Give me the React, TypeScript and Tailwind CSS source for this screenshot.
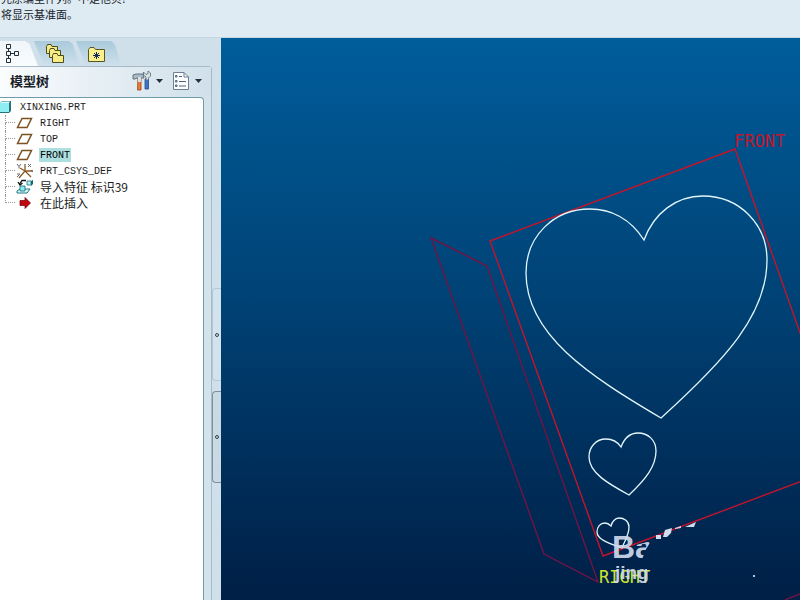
import type { ReactNode } from "react";

const CJK = "font-['Liberation_Mono','Noto_Sans_CJK_SC',monospace]";

function PlaneIcon() {
  return (
    <svg width="18" height="16" viewBox="0 0 18 16" fill="none" aria-hidden="true">
      <path d="M6 3.5H15.5L11 12.5H1.5Z" stroke="#7a5220" strokeWidth="1.5" />
    </svg>
  );
}

function CsysIcon() {
  return (
    <svg width="18" height="16" viewBox="0 0 18 16" fill="none" aria-hidden="true">
      <path d="M9 1V8L3 15M9 8L15 14M9 8H17M9 8L4 5" stroke="#8a5a22" strokeWidth="1.3" />
      <path d="M1 1L3 3.5V5.5M5 1L3 3.5M12 1L15 4M15 1L12 4M15 7L17 9M1 11H4L1 14" stroke="#6c6c70" />
    </svg>
  );
}

function ImportIcon() {
  return (
    <svg width="18" height="16" viewBox="0 0 18 16" aria-hidden="true">
      <path d="M11 2H15V6H11Z" fill="#b9f4f4" stroke="#3d8b92" />
      <path d="M15 2L17 1V5L15 7Z" fill="#176770" />
      <path d="M1 12L4 10H14L11 14H1Z" fill="#d9ffff" stroke="#207680" />
      <path d="M4 7H9V12H4Z" fill="#8deaf0" stroke="#31818a" />
      <path d="M10 1.5H6L4 4.500M2 3L4 6L6.500 4" fill="none" stroke="#111" strokeWidth="1.3" />
    </svg>
  );
}

function ArrowIcon() {
  return (
    <svg width="18" height="16" viewBox="0 0 18 16" aria-hidden="true">
      <path d="M4 5.500H9V2.500L14.500 8L9 13.500V10.500H4Z" fill="#c4040e" stroke="#65040a" strokeWidth=".7" />
    </svg>
  );
}

function FolderStackIcon() {
  return (
    <svg width="20" height="20" viewBox="0 0 20 20" aria-hidden="true">
      {[[1, 0], [4, 4], [7, 9]].map(([x, y]) => (
        <path
          key={x}
          transform={`translate(${x} ${y})`}
          d="M.5 2.500L1.500 .5H5L6 2.500H11.500V9.500H.5Z"
          fill="#f6ec86"
          stroke="#4f4c1c"
        />
      ))}
    </svg>
  );
}

function FolderStarIcon() {
  return (
    <svg width="20" height="20" viewBox="0 0 20 20" aria-hidden="true">
      <path d="M1.500 5.500L3 3.500H7L8.500 5.500H17.500V17.500H1.500Z" fill="#faf08c" stroke="#5a5522" />
      <path d="M9.500 8V15M6 11.500H13M7 9L12 14M12 9L7 14" stroke="#142a5c" />
    </svg>
  );
}

function TreeTabIcon() {
  return (
    <svg width="18" height="20" viewBox="0 0 18 20" fill="none" stroke="#222e38" aria-hidden="true">
      <path d="M2.500 .5H6.500V4.500H2.500ZM2.500 7.500H6.500V11.500H2.500ZM2.500 14.500H6.500V18.500H2.500ZM10.500 7.500H14.500V11.500H10.500ZM4.500 4.500V7.500M4.500 11.500V14.500M6.500 9.500H10.500" />
    </svg>
  );
}

function ToolsIcon() {
  return (
    <svg width="20" height="22" viewBox="0 0 20 22" aria-hidden="true">
      <path d="M13 9H16.500V19H13Z" fill="#3b75c9" stroke="#234a88" strokeWidth=".8" />
      <path d="M14 10V7L11.500 5V2L14 4.500L16 3.500V1L18.500 3V6L16.500 8V10Z" fill="#dbe2e7" stroke="#5b666f" strokeWidth=".8" />
      <path d="M6 7H9V20H5.500Z" fill="#ea7b33" stroke="#944316" strokeWidth=".8" />
      <path d="M1 9V5L4 4H11L12 8H5L3 9Z" fill="#a9bbc8" stroke="#4b5b68" strokeWidth=".8" />
      <path d="M6 7H9V12H6Z" fill="#d7e0e6" />
    </svg>
  );
}

function ListIcon() {
  return (
    <svg width="18" height="20" viewBox="0 0 18 20" fill="none" aria-hidden="true">
      <path d="M1.500 1.500H12L16.500 6V18.500H1.500Z" fill="#fbfdff" stroke="#6c7e90" />
      <path d="M12 1.500V6H16.500" stroke="#6c7e90" />
      <path d="M7 5.500H10M7 10.500H14M7 15H14" stroke="#50647a" />
      <path d="M3.500 4.500H5V6H3.500ZM3.500 9.500H5V11H3.500ZM3.500 14H5V15.500H3.500Z" stroke="#50647a" />
    </svg>
  );
}

function Caret() {
  return (
    <svg width="7" height="4" viewBox="0 0 7 4" aria-hidden="true">
      <path d="M0 0H7L3.500 4Z" fill="#22303a" />
    </svg>
  );
}

function Tab({ label, active, children }: { label: string; active?: boolean; children: ReactNode }) {
  return (
    <button
      role="tab"
      aria-selected={!!active}
      aria-label={label}
      className={
        active
          ? "flex h-full w-[38px] items-center bg-linear-to-b from-[#eff5f8] to-[#f9fcfd] pl-1 [clip-path:polygon(0_0,66%_0,78%_12%,100%_100%,0_100%)]"
          : "-ml-1 flex h-full w-[46px] items-center bg-linear-to-b from-[#a9cadb] to-[#cfe1eb] pl-[11px] [clip-path:polygon(0_0,76%_0,84%_12%,100%_100%,22%_100%)]"
      }
    >
      {children}
    </button>
  );
}

const features = [
  { label: "RIGHT", icon: <PlaneIcon /> },
  { label: "TOP", icon: <PlaneIcon /> },
  { label: "FRONT", icon: <PlaneIcon />, selected: true },
  { label: "PRT_CSYS_DEF", icon: <CsysIcon /> },
  { label: "导入特征 标识39", icon: <ImportIcon />, cjk: true },
  { label: "在此插入", icon: <ArrowIcon />, cjk: true },
];

function ModelTree() {
  return (
    <div className={`mr-[7px] flex-1 rounded-tr border-t border-r border-[#6f9cac] bg-white pt-px text-[10px] leading-4 text-[#1c1c1c] ${CJK}`}>
      <div className="flex h-4 items-center gap-2">
        <svg width="12" height="14" viewBox="0 0 12 14" aria-hidden="true">
          <path d="M0 3L2 1H11V11L9 13H0Z" fill="#28727c" />
          <path d="M0 3H9V12H0Z" fill="#8eeef2" />
          <path d="M0 3L2 1.500H10L9 3Z" fill="#d5ffff" />
        </svg>
        <span className="pt-px">XINXING.PRT</span>
      </div>
      <ul className="pl-[5px]">
        {features.map((f, i) => (
          <li key={f.label} className="flex h-4 items-center">
            <span className="mr-px flex h-4 w-[10px] flex-col">
              <span className="h-2 border-b border-l border-dotted border-[#9a9a9a]" />
              {i < features.length - 1 && <span className="h-2 border-l border-dotted border-[#9a9a9a]" />}
            </span>
            {f.icon}
            <span className="w-[5px]" />
            <button
              className={
                f.selected
                  ? "h-[14px] bg-[#aedfe0] px-px pt-px leading-[13px] text-black"
                  : f.cjk
                    ? "pl-px font-['Noto_Sans_CJK_SC',sans-serif] text-xs leading-4"
                    : "pt-px pl-px leading-4"
              }
            >
              {f.label}
            </button>
          </li>
        ))}
      </ul>
    </div>
  );
}

function Viewport() {
  return (
    <main className="relative min-w-0 flex-1 overflow-hidden bg-linear-to-b from-[#005d9b] via-[#004376] via-45% to-[#001f46]">
      <svg className="absolute top-0 left-0 h-full w-full" fill="none" aria-label="XINXING.PRT">
        <defs>
          <clipPath id="fade">
            <path d="M610 530H636V545L651 541L645 551L642 560L650 575V586H610Z" />
          </clipPath>
        </defs>
        <g transform="translate(-221 -38)">
          <g stroke="#711445" strokeWidth="1.4">
            <path d="M431 238L487 266L598 582L544 554Z" />
            <path d="M785 600L800 594" />
          </g>
          <path d="M810 361L735 149L490 241L603 556L810 478" stroke="#c3142c" strokeWidth="1.4" />
          <g stroke="#e2f6fb" strokeWidth="1.3">
            <path d="M644 240C630 218 610 209 590 209C554 209 526 236 526 273C526 335 590 376 661 418C725 360 767 315 767 260C767 224 739 196 703 196C676 196 654 213 644 240Z" />
            <path d="M621 447C617 441 612 439 606 439C596 439 589 447 589 457C589 473 609 484 629 495C646 479 656 466 656 451C656 440 648 433 638 433C630 433 624 439 621 447Z" />
            <path d="M611 526C609 524 607 523 605 523C600 523 597 527 597 532C597 540 611 544 622 548C625 540 629 535 629 527C629 521 624 518 619 518C615 518 612 522 611 526Z" />
          </g>
          <text x="734" y="147" fill="#bd182b" className="font-['DejaVu_Sans_Mono',monospace] text-[17px]">FRONT</text>
          <text x="599" y="583" fill="#cbe62c" className="font-['DejaVu_Sans_Mono',monospace] text-[17px]">RIGHT</text>
          <g clipPath="url(#fade)" fill="#d2dced" fillOpacity=".92">
            <text x="612" y="558" className="font-['Liberation_Sans',sans-serif] text-[32px] font-bold">Ba</text>
            <text x="615" y="579" className="font-['Liberation_Sans',sans-serif] text-[19px] font-bold">jing</text>
          </g>
          <path d="M656 535H661V539H656ZM663 537L665 530L672 528L671 533L667 537ZM675 528L681 526V528L675 529ZM685 527L696 522L694 527H685Z" fill="#d2dced" />
          <path d="M753 575H755V577H753Z" fill="#b4cadb" />
        </g>
      </svg>
    </main>
  );
}

export default function App() {
  return (
    <div className="flex h-screen flex-col overflow-hidden bg-[#d0e0ea]">
      <header className="flex h-[38px] shrink-0 flex-col justify-end border-b border-[#c5d7e1] bg-[#dfebf3] pb-[15px] pl-px font-['Noto_Sans_CJK_SC',sans-serif] text-[11px] leading-4 text-[#17222c]">
        <p>先原编型件列。不是他贝!</p>
        <p>将显示基准面。</p>
      </header>
      <div className="flex min-h-0 flex-1">
        <aside className="flex w-[221px] shrink-0">
          <div className="flex w-[212px] flex-col">
            <div role="tablist" className="mt-[3px] flex h-[25px] shrink-0">
              <Tab label="模型树" active>
                <TreeTabIcon />
              </Tab>
              <Tab label="文件夹">
                <FolderStackIcon />
              </Tab>
              <Tab label="收藏夹">
                <FolderStarIcon />
              </Tab>
            </div>
            <section className="flex min-h-0 flex-1 flex-col rounded-tr border-t border-r border-[#a6bac7] bg-[#d3e3ec]">
              <div className="flex h-[30px] shrink-0 items-center bg-linear-to-r from-[#fafcfd] to-[#d0e0ea] pr-[9px] pb-[2px] pl-[10px]">
                <h1 className="flex-1 font-['Noto_Sans_CJK_SC',sans-serif] text-[13px] leading-4 font-bold text-[#182028]">模型树</h1>
                <button aria-label="设置" className="mr-[9px] flex items-center gap-1">
                  <ToolsIcon />
                  <Caret />
                </button>
                <button aria-label="显示" className="flex items-center gap-[5px]">
                  <ListIcon />
                  <Caret />
                </button>
              </div>
              <ModelTree />
            </section>
          </div>
          <div className="flex flex-1 flex-col gap-[10px] pt-[250px]">
            <button aria-label="展开" className="flex h-[93px] items-center justify-center rounded-l border border-r-0 border-[#b4c7d4] bg-[#d3e3ed]">
              <span className="size-[4px] rounded-full border border-[#33424c]" />
            </button>
            <button aria-label="折叠" className="flex h-[92px] items-center justify-center rounded-l border border-r-0 border-[#7e909c] bg-[#c9dae5]">
              <span className="size-[4px] rounded-full border border-[#33424c]" />
            </button>
          </div>
        </aside>
        <Viewport />
      </div>
    </div>
  );
}
